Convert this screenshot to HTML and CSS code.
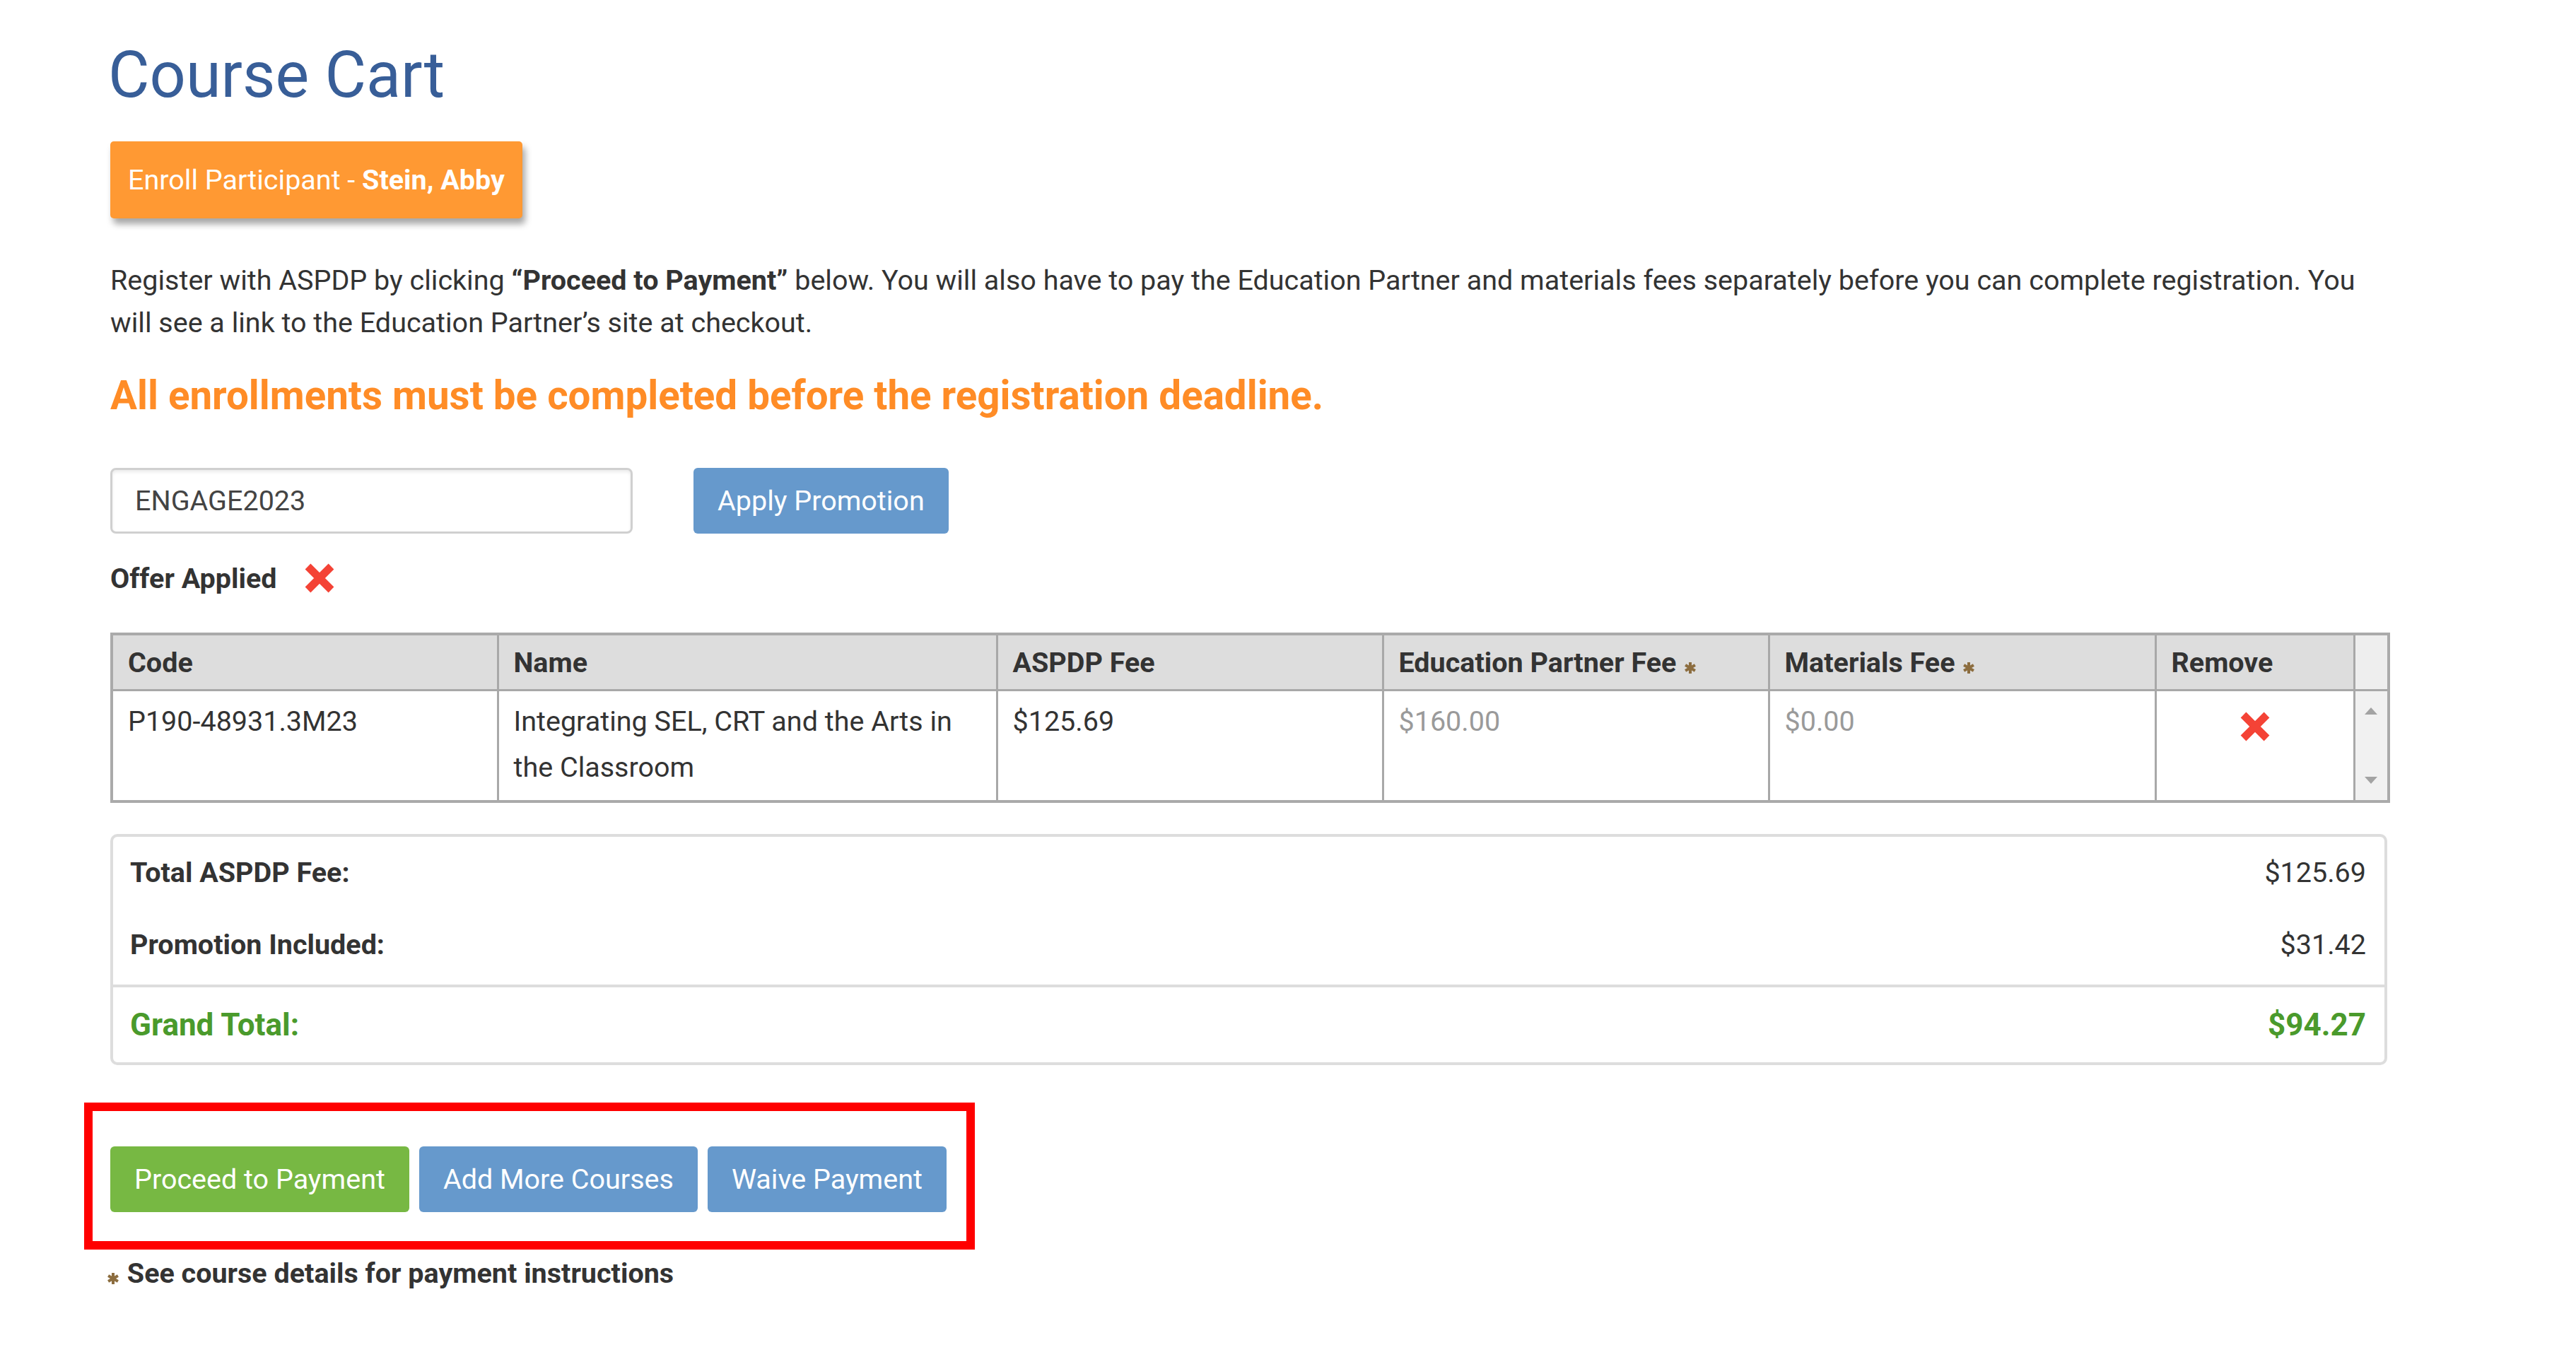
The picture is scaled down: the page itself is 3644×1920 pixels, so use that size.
FILE: index.html
```html
<!DOCTYPE html>
<html lang="en">
<head>
  <meta charset="UTF-8">
  <meta name="viewport" content="width=device-width, initial-scale=1.0">
  <title>Course Cart</title>
  <link rel="stylesheet" href="styles.css">
</head>
<body>
  <div class="page">
    <h1>Course Cart</h1>

    <button class="enroll">Enroll Participant - <strong>Stein, Abby</strong></button>

    <p class="intro">Register with ASPDP by clicking <strong>&ldquo;Proceed to Payment&rdquo;</strong> below. You will also have to pay the Education Partner and materials fees separately before you can complete registration. You will see a link to the Education Partner&rsquo;s site at checkout.</p>

    <h2 class="deadline">All enrollments must be completed before the registration deadline.</h2>

    <div class="promo">
      <input class="promo-code" type="text" value="ENGAGE2023">
      <button class="btn btn-blue">Apply Promotion</button>
    </div>

    <div class="offer">
      <span>Offer Applied</span>
      <svg class="x-icon" viewBox="0 0 40 40"><path d="M5 5 L35 35 M35 5 L5 35"/></svg>
    </div>

    <table class="cart">
      <colgroup>
        <col style="width:546px">
        <col style="width:706px">
        <col style="width:546px">
        <col style="width:546px">
        <col style="width:547px">
        <col style="width:281px">
        <col style="width:49px">
      </colgroup>
      <thead>
        <tr>
          <th>Code</th>
          <th>Name</th>
          <th>ASPDP Fee</th>
          <th>Education Partner Fee <svg class="star" viewBox="0 0 20 20"><path d="M10 2 V18 M3.1 6 L16.9 14 M3.1 14 L16.9 6"/></svg></th>
          <th>Materials Fee <svg class="star" viewBox="0 0 20 20"><path d="M10 2 V18 M3.1 6 L16.9 14 M3.1 14 L16.9 6"/></svg></th>
          <th>Remove</th>
          <th class="scroll-head"></th>
        </tr>
      </thead>
      <tbody>
        <tr>
          <td>P190-48931.3M23</td>
          <td>Integrating SEL, CRT and the Arts in the Classroom</td>
          <td>$125.69</td>
          <td class="muted">$160.00</td>
          <td class="muted">$0.00</td>
          <td class="remove"><svg class="x-icon" viewBox="0 0 40 40"><path d="M5 5 L35 35 M35 5 L5 35"/></svg></td>
          <td class="scroll-bar">
            <div class="scroll-track">
              <svg viewBox="0 0 20 12"><path d="M10 1 L19 11 H1 Z"/></svg>
              <svg viewBox="0 0 20 12"><path d="M1 1 H19 L10 11 Z"/></svg>
            </div>
          </td>
        </tr>
      </tbody>
    </table>

    <div class="totals">
      <div class="totals-top">
        <div class="total-row"><span>Total ASPDP Fee:</span><span class="amount">$125.69</span></div>
        <div class="total-row"><span>Promotion Included:</span><span class="amount">$31.42</span></div>
      </div>
      <div class="total-row grand"><span>Grand Total:</span><span>$94.27</span></div>
    </div>

    <div class="highlight">
      <div class="actions">
        <button class="btn btn-green">Proceed to Payment</button>
        <button class="btn btn-blue">Add More Courses</button>
        <button class="btn btn-blue">Waive Payment</button>
      </div>
    </div>

    <p class="note"><svg class="star" viewBox="0 0 20 20"><path d="M10 2 V18 M3.1 6 L16.9 14 M3.1 14 L16.9 6"/></svg> See course details for payment instructions</p>
  </div>
</body>
</html>
```

FILE: styles.css
```css
body {
  font-family: Roboto, 'Liberation Sans', sans-serif;
  background-color: #ffffff;
  margin: 0;
  color: #333;
  font-size: 39.5px;
}

.page {
  width: 3221px;
  padding: 0 0 80px 156px;
}

h1 {
  font-size: 90px;
  font-weight: 400;
  line-height: 99px;
  color: #385e98;
  margin: 57px 0 0 -3px;
}

button {
  font-family: inherit;
  cursor: pointer;
}

.enroll {
  margin-top: 44px;
  height: 109px;
  padding: 0 25px;
  font-size: 39.5px;
  color: #fff;
  background-color: #ff9933;
  border: none;
  border-radius: 5px;
  box-shadow: 4px 8px 10px rgba(0, 0, 0, 0.35);
}

.intro {
  margin: 58px 0 0;
  line-height: 60px;
}

.deadline {
  margin: 37px 0 0;
  font-size: 56.5px;
  line-height: 73px;
  color: #ff8c26;
}

.promo {
  display: flex;
  gap: 86px;
  margin-top: 65px;
}

.promo-code {
  width: 739px;
  height: 93px;
  box-sizing: border-box;
  padding: 0 32px;
  font-family: inherit;
  font-size: 39.5px;
  color: #444;
  border: 3px solid #d0d0d0;
  border-radius: 8px;
  box-shadow: inset 0 3px 4px rgba(0, 0, 0, 0.08);
}

.btn {
  height: 93px;
  padding: 0 34px;
  font-size: 39.5px;
  color: #fff;
  border: none;
  border-radius: 6px;
}

.btn-blue {
  background-color: #6699cc;
}

.btn-green {
  background-color: #77b843;
}

.offer {
  display: flex;
  align-items: center;
  gap: 38px;
  height: 60px;
  margin-top: 33px;
  font-weight: 700;
}

.x-icon {
  width: 44px;
  height: 44px;
}

.x-icon path {
  stroke: #f44336;
  stroke-width: 10;
  fill: none;
}

.star {
  width: 20px;
  height: 20px;
  vertical-align: -4px;
}

.star path {
  stroke: #8c6d3f;
  stroke-width: 4;
  fill: none;
}

.cart {
  margin-top: 47px;
  table-layout: fixed;
  width: 3221px;
  border-collapse: collapse;
  border: 4px solid #aaa;
}

.cart th, .cart td {
  border: 3px solid #a8a8a8;
  text-align: left;
  vertical-align: top;
  padding: 0 21px;
}

.cart th {
  height: 76px;
  vertical-align: middle;
  background-color: #dddddd;
  font-weight: 700;
}

.cart td {
  padding-top: 10px;
  line-height: 65px;
}

.cart td.muted {
  color: #9a9a9a;
}

.cart td.remove {
  text-align: center;
  padding-top: 26px;
}

.cart th.scroll-head {
  background-color: #eeeeee;
  padding: 0;
}

.cart td.scroll-bar {
  padding: 0;
  background-color: #f1f1f1;
}

.scroll-track {
  display: flex;
  flex-direction: column;
  justify-content: space-between;
  align-items: center;
  height: 154px;
  padding: 22px 0;
  box-sizing: border-box;
}

.scroll-track svg {
  width: 20px;
  height: 12px;
  fill: #a3a3a3;
}

.totals {
  margin-top: 44px;
  border: 4px solid #dddddd;
  border-radius: 10px;
}

.totals-top {
  padding: 0 0 5px;
  border-bottom: 4px solid #dddddd;
}

.total-row {
  display: flex;
  justify-content: space-between;
  padding: 0 26px 0 24px;
  line-height: 102px;
  font-weight: 700;
}

.total-row .amount {
  font-weight: 400;
}

.total-row.grand {
  font-size: 44px;
  color: #4a9a2c;
  line-height: 106px;
}

.highlight {
  display: inline-block;
  margin: 53px 0 0 -37px;
  padding: 50px 28px 41px 25px;
  border: 12px solid #ff0000;
}

.actions {
  display: flex;
  gap: 14px;
}

.note {
  margin: 10px 0 0 -6px;
  font-weight: 700;
}
```
